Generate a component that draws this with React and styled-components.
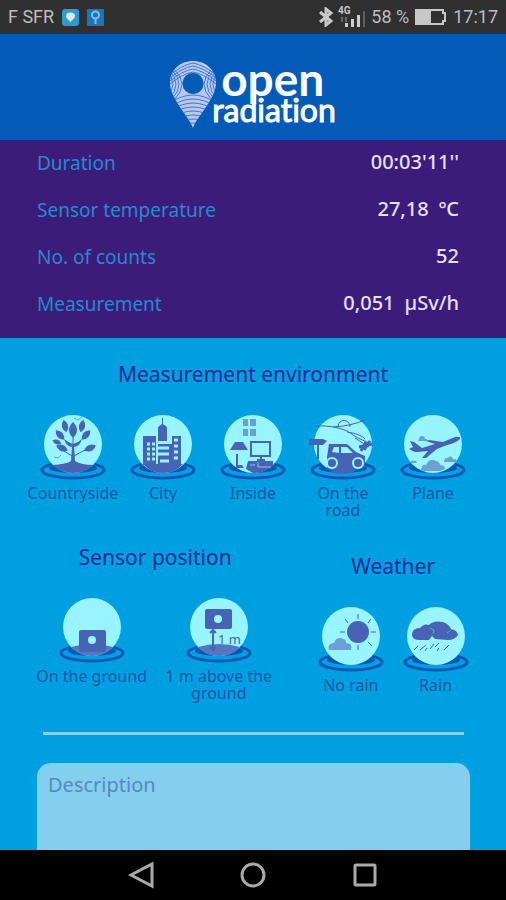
import React from "react";
import styled, { createGlobalStyle } from "styled-components";

const GlobalStyle = createGlobalStyle`
  *, *::before, *::after { box-sizing: border-box; }
  body { margin: 0; background: #009fe1; }
  button, textarea { font: inherit; color: inherit; }
`;

const INK = "#4763b3";
const SOFT = "#6c9fd3";
const GLOBE = "#98f5ff";

const Screen = styled.div`
  display: flex;
  flex-direction: column;
  height: 100vh;
  font-family: "Noto Sans", sans-serif;
  background: #009fe1;
`;

const StatusBar = styled.div`
  display: flex;
  flex: none;
  align-items: center;
  justify-content: space-between;
  height: 34px;
  padding: 0 8px;
  background: #303030;
  color: #bdbdbd;
  font: 18px/34px Roboto, sans-serif;
  white-space: nowrap;
`;

const StatusGroup = styled.div`
  display: flex;
  align-items: center;
  gap: ${(p) => p.$gap}px;
`;

const Header = styled.header`
  display: flex;
  flex: none;
  justify-content: center;
  height: 106px;
  padding-top: 27px;
  background: #035bb7;
`;

const Brand = styled.h1`
  display: flex;
  margin: 0;
  color: #fff;
  font-family: Lato, sans-serif;
  font-weight: 700;
  font-variant-ligatures: none;
`;

const BrandWords = styled.span`
  display: flex;
  flex-direction: column;
  padding-top: 4px;
`;

const BrandOpen = styled.span`
  padding-left: 5px;
  font-size: 46px;
  line-height: 28px;
`;

const BrandRadiation = styled.span`
  margin-left: -4px;
  font-size: 32px;
  line-height: 34px;
  font-weight: 400;
  -webkit-text-stroke: 1px #fff;
`;

const Readings = styled.dl`
  flex: none;
  height: 198px;
  margin: 0;
  padding: 0 47px 0 37px;
  background: #3c1c7b;
  border-top: 2px solid #2c2478;
`;

const Reading = styled.div`
  display: flex;
  align-items: center;
  justify-content: space-between;
  height: 47px;
  padding-bottom: 5px;
`;

const ReadingName = styled.dt`
  color: #2988cb;
  font-size: 19px;
`;

const ReadingValue = styled.dd`
  display: flex;
  gap: 10px;
  margin: 0;
  padding-bottom: 4px;
  color: #e6e0fa;
  font-size: 20px;
  font-weight: 500;
`;

const Content = styled.main`
  flex: 1;
  min-height: 0;
  overflow: hidden auto;
  scrollbar-width: none;
  padding: 20px 28px 0;
`;

const Section = styled.section`
  padding-top: ${(p) => p.$drop || 0}px;
`;

const Title = styled.h2`
  margin: 0 0 ${(p) => p.$gap}px;
  color: #1c2b96;
  font-size: 21px;
  line-height: 32px;
  font-weight: 400;
  text-align: center;
`;

const Choices = styled.div`
  display: grid;
  grid-template-columns: repeat(${(p) => p.$count}, 1fr);
  align-items: start;
`;

const Choice = styled.button`
  display: flex;
  flex-direction: column;
  align-items: center;
  gap: 4px;
  min-width: 0;
  padding: 0;
  border: 0;
  background: none;
  color: #1d55ad;
  font-size: 16px;
  line-height: 17px;
  cursor: pointer;
`;

const ChoiceLabel = styled.span`
  max-width: ${(p) => p.$width || 120}px;
  margin: 0 -8px;
`;

const Columns = styled.div`
  display: grid;
  grid-template-columns: 3fr 2fr;
  gap: 26px;
  align-items: start;
  margin-top: 22px;
`;

const Rule = styled.hr`
  height: 3px;
  margin: 30px 14px 28px 15px;
  border: 0;
  background: #84d2f3;
`;

const Description = styled.textarea`
  display: block;
  width: calc(100% - 17px);
  height: 180px;
  margin: 0 8px 0 9px;
  padding: 7px 11px;
  border: 0;
  border-radius: 14px;
  outline: 0;
  resize: none;
  background: #85cfee;
  color: #1d55ad;
  font-size: 20px;
  line-height: 30px;
  &::placeholder { color: #568abb; opacity: 1; }
`;

const NavBar = styled.nav`
  display: flex;
  flex: none;
  justify-content: center;
  height: 50px;
  background: #000;
`;

const NavButton = styled.button`
  display: grid;
  place-items: center;
  width: 112px;
  padding: 0;
  border: 0;
  background: none;
`;

const PinLogo = () => (
  <svg width="46" height="68" viewBox="0 0 46 68" aria-hidden="true">
    <defs>
      <clipPath id="pin">
        <path clipRule="evenodd" d="M23 67 C19 55 0 38 0 22 C0 9 10 0 23 0 C36 0 46 9 46 22 C46 38 27 55 23 67Z M23 12 A10.500 10.500 0 1 0 23 33 A10.500 10.500 0 1 0 23 12Z" />
      </clipPath>
    </defs>
    <g clipPath="url(#pin)" fill="none">
      <rect width="46" height="68" fill="#b8c8ee" />
      <circle cx="23" cy="22.500" r="10.500" fill="#035bb7" />
      <g stroke="#3f78c8" strokeWidth="1">
        {[2, 5, 8, 11].map((y) => (
          <path key={y} d={`M0 ${y + 12} Q12 ${y + 2} 23 ${y} Q34 ${y + 2} 46 ${y + 12}`} />
        ))}
        {[3, 6, 9, 12].map((x) => (
          <g key={x}>
            <path d={`M${x - 7} 9 Q${x + 7} 23 ${x - 7} 38`} />
            <path d={`M${53 - x} 9 Q${39 - x} 23 ${53 - x} 38`} />
          </g>
        ))}
        {[34, 38, 42, 46, 50, 54, 58, 62].map((y) => (
          <path key={y} d={`M0 ${y + 8} Q23 ${y - 8} 46 ${y + 8}`} />
        ))}
      </g>
    </g>
  </svg>
);

const MiniPin = ({ ring }) => (
  <svg width="17" height="17" viewBox="0 0 17 17" aria-hidden="true">
    <rect width="17" height="17" rx={ring ? 1 : 3} fill={ring ? "#1778b8" : "#2d9bd0"} />
    {ring ? (
      <g fill="none" stroke="#86b9df">
        <circle cx="8.500" cy="6" r="3.500" strokeWidth="2" />
        <path d="M8.500 10v5" strokeWidth="2" />
      </g>
    ) : (
      <path d="M8.500 13C7 11 4 9.500 4 7a4.500 3.500 0 0 1 9 0c0 2.500-3 4-4.500 6Z" fill="#d9e8ef" />
    )}
  </svg>
);

const Bluetooth = () => (
  <svg width="14" height="20" viewBox="0 0 14 20" fill="none" stroke="#c8c8c8" strokeWidth="3" aria-hidden="true">
    <path d="M1 5 12 14 7 18V2l5 4L1 15" />
  </svg>
);

const Signal = () => (
  <svg width="28" height="24" viewBox="0 0 28 24" aria-label="4G signal">
    <text x="0" y="9" fontFamily="Roboto, sans-serif" fontSize="10" fontWeight="700" fill="#c8c8c8">4G</text>
    <path d="M4 12v5M8 12v5" stroke="#696969" strokeWidth="2" />
    <path d="M7 18h3v4H7zM13 14h3v8h-3zM19 10h3v12h-3z" fill="#cdcdcd" />
    <path d="M25 6h2v16h-2z" fill="#5d5d5d" />
  </svg>
);

const Battery = () => (
  <svg width="34" height="18" viewBox="0 0 34 18" aria-hidden="true">
    <path d="M2 2h27v3h2v8h-2v3H2z" fill="none" stroke="#c8c8c8" strokeWidth="2" />
    <path d="M3 3h14v12H3z" fill="#c8c8c8" />
  </svg>
);

const Globe = ({ children, ground }) => (
  <svg width="68" height="68" viewBox="0 0 68 68" fill="none" aria-hidden="true">
    <ellipse cx="34" cy="57" rx="31" ry="8" stroke="#0759b3" strokeWidth="3" />
    <ellipse cx="34" cy="55" rx="24" ry="5" fill="#0759b3" />
    <circle cx="34" cy="31" r="29" fill={GLOBE} />
    {ground && <path d="M13 51 Q34 45 55 51 Q47 60 34 60 Q21 60 13 51Z" fill="#5577bf" />}
    {children}
  </svg>
);

const Leaf = ({ x, y, turn, size = 1 }) => (
  <path transform={`translate(${x} ${y}) rotate(${turn}) scale(${size})`} d="M0 8 Q-8 0 0-8 Q8 0 0 8Z" fill={INK} />
);

const Tree = () => (
  <Globe>
    <path d="M13 52 Q28 51 32 48 L33 34 Q27 33 25 26 Q30 30 34 31 Q39 30 43 26 Q41 33 35 34 L36 48 Q42 52 55 52 Q45 60 34 60 Q23 60 13 52Z" fill={INK} />
    <path d="M33 43 Q27 39 21 36M35 43 Q42 39 48 36M34 35V19" stroke={INK} strokeWidth="1" />
    <Leaf x={34} y={17} turn={0} />
    <Leaf x={26} y={13} turn={-12} size={0.8} />
    <Leaf x={43} y={13} turn={12} size={0.8} />
    <Leaf x={21} y={22} turn={-42} size={0.8} />
    <Leaf x={47} y={22} turn={42} size={0.8} />
    <Leaf x={18} y={29} turn={-68} size={0.6} />
    <Leaf x={23} y={35} turn={-66} size={0.8} />
    <Leaf x={51} y={35} turn={66} size={0.8} />
    <path d="m35 5 4 2 4-3M15 44l4 1 3-3" stroke={SOFT} strokeWidth="1" />
  </Globe>
);

const City = () => (
  <Globe>
    <path d="M14 23h13v29H14zM29 31h14v22H29zM43 23h9v30h-9zM29 14l4-3V5h1v6l4 3v14h-9zM14 51h40q-8 9-20 9T14 51Z" fill={INK} />
    <path d="M18 31h3m2 0h3M18 36h3m2 0h3M18 41h3m2 0h3M18 46h3m2 0h3M45 27h4M45 33h4M45 39h4M45 45h4" stroke={GLOBE} strokeWidth="3" />
    <path d="M29 35h11M29 41h11M31 48h9" stroke={GLOBE} strokeWidth="3" />
  </Globe>
);

const Room = () => (
  <Globe>
    <path d="M24 6h5v7h-5zM31 6h6v7h-6zM24 16h5v7h-5zM31 16h6v7h-6z" fill={SOFT} />
    <path d="M16 29h8l5 8H11zM17 41h2v11h4l2 3h-8zM29 48h25v5q-8 7-20 7l-7-4z" fill={INK} />
    <path d="M32 29h19v14H32zM42 43v5M38 47h8" stroke={INK} strokeWidth="2" />
    <path d="M39 49v5h13M31 52h5" stroke="#8dc4e8" strokeWidth="1" />
  </Globe>
);

const Road = () => (
  <Globe>
    <path d="M7 13Q25 12 38 18Q47 25 60 30M24 14Q42 13 56 7M29 13a5 5 0 1 1 12 1M38 19q14 2 18 7M46 25l14 9" stroke={INK} strokeWidth="1" />
    <path d="m61 28-6 9M57 29l-5 9M50 34l13-3" stroke={INK} strokeWidth="3" />
    <path d="M0 26h14l4 2-4 4H0zM8 32h2v14H8zM18 44l2-13h18l9 8 9 4v11l-8 3q-7 4-14 4-9 0-14-4h-2z" fill={INK} />
    <path d="m23 39 2-5h5v6zM32 34h6l6 6H32z" fill={GLOBE} />
    <circle cx="23" cy="50" r="6" fill={GLOBE} /><circle cx="23" cy="50" r="4" fill={INK} />
    <circle cx="49" cy="50" r="6" fill={GLOBE} /><circle cx="49" cy="50" r="4" fill={INK} />
  </Globe>
);

const Plane = () => (
  <Globe>
    <path d="m11 28 4 1 8 6 13-4-9-3 3-1 14 2 12-5q6-1 5 2-4 4-13 6l-10 4-11 9h-4l6-7-10 1q-5 0-7-2l-2-1 4-2z" fill={INK} />
    <path d="M20 26a3 3 0 0 1 6 0h2v2h-9zM45 48q1-4 4-3 3-4 5 1 4 0 4 3H45zM11 50h7q-1-3-3-2-2-2-4 2zM22 57q1-6 5-5 3-7 10-4 3 0 4 4 5 0 5 4l-5 2H25z" fill={SOFT} />
  </Globe>
);

const Ground = () => (
  <Globe ground>
    <rect x="21" y="34" width="27" height="22" rx="2" fill={INK} />
    <circle cx="34" cy="44" r="4" fill={GLOBE} />
  </Globe>
);

const Above = () => (
  <Globe ground>
    <rect x="20" y="13" width="27" height="20" rx="2" fill={INK} />
    <circle cx="33" cy="23" r="4" fill={GLOBE} />
    <path d="M28 34v20M25 37l3-3 3 3M25 51l3 3 3-3" stroke={INK} strokeWidth="2" />
    <text x="33" y="48" fontFamily="Noto Sans, sans-serif" fontSize="13" fill={INK}>1 m</text>
  </Globe>
);

const Sun = () => (
  <Globe>
    <circle cx="41" cy="27" r="11" fill={INK} />
    <path d="M41 9v5M41 40v5M23 27h5M54 27h5M28 14l3 4M54 14l-3 4M51 37l4 4" stroke={INK} strokeWidth="1" />
    <path d="M12 45q-2-7 5-7 3-7 9-4 3 0 3 4 7 0 5 7z" fill={SOFT} />
  </Globe>
);

const Rain = () => (
  <Globe>
    <path d="M10 30q0-7 8-7 4-5 9-3 4-5 14-3 6 2 8 7 6 1 7 6-3 5-10 5l-13-1-3-3-3 4H18q-8 0-8-5z" fill={INK} />
    <path d="m28 23 4 2-1 4M49 25l-4 3" stroke={SOFT} strokeWidth="1" />
    <path d="m12 45 4-4M18 45l6-5M23 46l2-3M28 44l4-5M33 42l4-4M35 46l2-3M42 45l5-5" stroke={INK} strokeWidth="1" />
  </Globe>
);

const ENVIRONMENTS = [
  { label: "Countryside", Icon: Tree },
  { label: "City", Icon: City },
  { label: "Inside", Icon: Room },
  { label: "On the road", Icon: Road, width: 60 },
  { label: "Plane", Icon: Plane },
];
const POSITIONS = [
  { label: "On the ground", Icon: Ground },
  { label: "1 m above the ground", Icon: Above },
];
const WEATHERS = [
  { label: "No rain", Icon: Sun },
  { label: "Rain", Icon: Rain },
];
const READINGS = [
  ["Duration", "00:03'11''"],
  ["Sensor temperature", "27,18", "ºC"],
  ["No. of counts", "52"],
  ["Measurement", "0,051", "µSv/h"],
];

const ChoiceGroup = ({ title, items, gap, drop }) => (
  <Section $drop={drop}>
    <Title $gap={gap}>{title}</Title>
    <Choices $count={items.length}>
      {items.map(({ label, Icon, width }) => (
        <Choice key={label} type="button">
          <Icon />
          <ChoiceLabel $width={width}>{label}</ChoiceLabel>
        </Choice>
      ))}
    </Choices>
  </Section>
);

export default function App() {
  return (
    <Screen>
      <GlobalStyle />
      <StatusBar>
        <StatusGroup $gap={8}>
          <span>F SFR</span>
          <MiniPin />
          <MiniPin ring />
        </StatusGroup>
        <StatusGroup $gap={5}>
          <Bluetooth />
          <Signal />
          <span>58 %</span>
          <Battery />
          <span>17:17</span>
        </StatusGroup>
      </StatusBar>
      <Header>
        <Brand>
          <PinLogo />
          <BrandWords>
            <BrandOpen>open</BrandOpen>
            <BrandRadiation>radiation</BrandRadiation>
          </BrandWords>
        </Brand>
      </Header>
      <Readings>
        {READINGS.map(([name, value, unit]) => (
          <Reading key={name}>
            <ReadingName>{name}</ReadingName>
            <ReadingValue>
              <span>{value}</span>
              {unit && <span>{unit}</span>}
            </ReadingValue>
          </Reading>
        ))}
      </Readings>
      <Content>
        <ChoiceGroup title="Measurement environment" items={ENVIRONMENTS} gap={23} />
        <Columns>
          <ChoiceGroup title="Sensor position" items={POSITIONS} gap={23} />
          <ChoiceGroup title="Weather" items={WEATHERS} gap={23} drop={9} />
        </Columns>
        <Rule />
        <Description aria-label="Description" placeholder="Description" />
      </Content>
      <NavBar aria-label="System">
        <NavButton type="button" aria-label="Back">
          <svg width="28" height="28" viewBox="0 0 28 28" fill="none" stroke="#aaa" strokeWidth="3"><path d="M25 3v22L4 14z" /></svg>
        </NavButton>
        <NavButton type="button" aria-label="Home">
          <svg width="28" height="28" viewBox="0 0 28 28" fill="none" stroke="#aaa" strokeWidth="3"><circle cx="14" cy="14" r="11" /></svg>
        </NavButton>
        <NavButton type="button" aria-label="Recent apps">
          <svg width="28" height="28" viewBox="0 0 28 28" fill="none" stroke="#aaa" strokeWidth="3"><rect x="4" y="4" width="20" height="20" rx="1" /></svg>
        </NavButton>
      </NavBar>
    </Screen>
  );
}
